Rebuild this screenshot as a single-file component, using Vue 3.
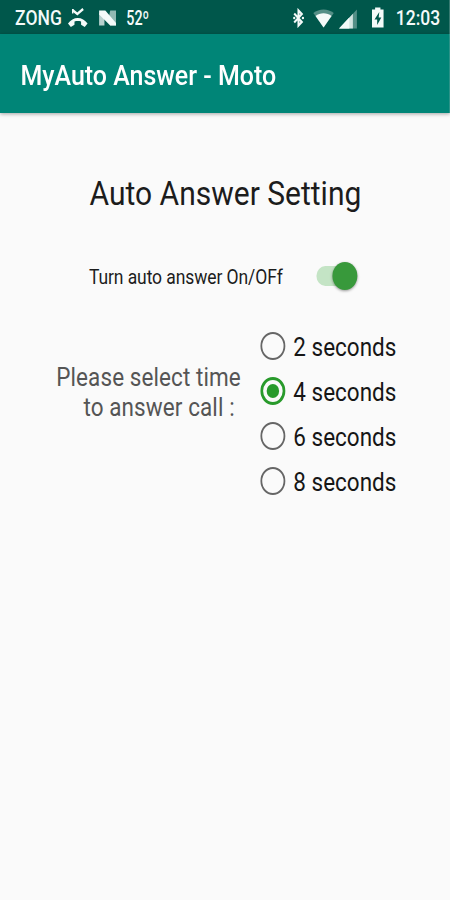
<script setup>
import { ref } from "vue";

const autoAnswer = ref(true);
const selected = ref(4);
const options = [2, 4, 6, 8];
</script>

<template>
  <div class="screen">
    <div class="status-bar">
      <span class="carrier">ZONG</span>
      <svg class="missed-icon" viewBox="0 0 23 20">
        <path d="M5.500 2L11 6L17.500 1" fill="none" stroke="currentColor" stroke-width="2.600" />
        <path d="M5.800 1V5.500" stroke="currentColor" stroke-width="1.600" />
        <path d="M0.500 15.500C6 8 17 8 22.500 15.500L19.300 19L15.200 16.800V13.500C12.700 12.900 10.300 12.900 7.800 13.500V16.800L3.700 19Z" fill="currentColor" />
      </svg>
      <svg class="n-icon" viewBox="0 0 20 16">
        <path d="M13 0.500H19.500V15.500H13L11 9Z" fill="currentColor" opacity="0.6" />
        <path d="M0.500 0.500H7.500L19.500 13V15.500H13L0.500 4.500Z" fill="currentColor" />
        <path d="M0.500 3V15.500H6.500V8Z" fill="currentColor" opacity="0.75" />
      </svg>
      <span class="temp">52º</span>
      <svg class="bt-icon" viewBox="0 0 14 20">
        <path d="M2 5.500L10.500 14L6.800 17.500V2.500L10.500 6L2 14.500" fill="none" stroke="currentColor" stroke-width="2.300" />
        <circle cx="2" cy="10" r="1.300" fill="currentColor" />
        <circle cx="11.800" cy="10" r="1.300" fill="currentColor" />
      </svg>
      <svg class="wifi-icon" viewBox="0 0 24 19">
        <path d="M12 18.500L0.500 4C7 -0.800 17 -0.800 23.500 4Z" fill="currentColor" opacity="0.35" />
        <path d="M12 18.500L3 7C8 3.300 16 3.300 21 7Z" fill="currentColor" />
      </svg>
      <svg class="signal-icon" viewBox="0 0 22 20">
        <path d="M0.500 19.500L20.500 0.500V19.500Z" fill="currentColor" opacity="0.35" />
        <path d="M0.500 19.500L16 4.800V19.500Z" fill="currentColor" opacity="0.8" />
        <path d="M0.500 19.500L12 8.600V19.500Z" fill="currentColor" />
      </svg>
      <svg class="battery-icon" viewBox="0 0 14 21">
        <path d="M4 0.500H10V2.500H13.500V20.500H0.500V2.500H4Z" fill="currentColor" />
        <path d="M8.700 5L3.300 12.400H6.300V18L11 10.600H8Z" fill="#00574b" />
      </svg>
      <span class="clock">12:03</span>
    </div>

    <header class="app-bar">MyAuto Answer - Moto</header>

    <main class="content">
      <h1>Auto Answer Setting</h1>

      <div class="toggle-row">
        <span>Turn auto answer On/OFf</span>
        <button
          class="switch"
          :class="{ on: autoAnswer }"
          role="switch"
          :aria-checked="autoAnswer"
          aria-label="Auto answer"
          @click="autoAnswer = !autoAnswer"
        >
          <span class="thumb"></span>
        </button>
      </div>

      <div class="time-row">
        <p class="prompt">
          <span>Please select time</span>
          <span class="second">to answer call :</span>
        </p>
        <div class="options">
          <label v-for="n in options" :key="n" class="option">
            <input v-model="selected" type="radio" name="delay" :value="n" />
            <span>{{ n }} seconds</span>
          </label>
        </div>
      </div>
    </main>
  </div>
</template>

<style>
body {
  overflow: hidden;
  background: #fafafa;
}
</style>

<style scoped>
/* 9:16 layout squeezed to the 1:2 viewport */
.screen {
  width: 506.25px;
  height: 900px;
  transform: scaleX(0.88889);
  transform-origin: 0 0;
  background: #fafafa;
  color: #1c1c1c;
  font-family: Roboto, "Liberation Sans", sans-serif;
}

.status-bar {
  display: flex;
  align-items: center;
  box-sizing: border-box;
  height: 34px;
  padding: 4px 11px 0 17px;
  background: #00574b;
  color: #f4faf9;
  font-size: 19.7px;
  font-weight: 500;
  line-height: 30px;
  white-space: nowrap;
}

.status-bar svg {
  flex: none;
}

.carrier {
  width: 59px;
}

.missed-icon {
  width: 23px;
  height: 20px;
  margin-top: -3px;
}

.n-icon {
  width: 20px;
  height: 16px;
  margin-left: 12px;
  margin-top: -3px;
}

.temp {
  margin-left: 11px;
  transform: scaleX(0.82);
  transform-origin: 0 50%;
}

.bt-icon {
  width: 14px;
  height: 20px;
  margin-left: auto;
  margin-right: 9px;
  margin-top: -3px;
}

.wifi-icon {
  width: 24px;
  height: 19px;
  margin-right: 5px;
  margin-top: -1px;
}

.signal-icon {
  width: 22px;
  height: 20px;
  margin-right: 15px;
  margin-top: -1px;
}

.battery-icon {
  width: 14px;
  height: 21px;
  margin-right: 13px;
  margin-top: -3px;
}

.app-bar {
  position: relative;
  box-sizing: border-box;
  height: 78.5px;
  padding-left: 23px;
  background: #008577;
  box-shadow: 0 1px 4px rgba(0, 0, 0, 0.35);
  color: #fff;
  font-size: 28.1px;
  font-weight: 500;
  line-height: 83px;
}

.content {
  padding-top: 61.5px;
}

h1 {
  margin: 0;
  padding-left: 1px;
  font-size: 33.75px;
  font-weight: 400;
  line-height: 40px;
  text-align: center;
}

.toggle-row {
  display: flex;
  align-items: center;
  height: 28px;
  margin-top: 48px;
  padding-left: 100px;
  font-size: 19.7px;
}

.toggle-row > span {
  width: 256px;
  padding-top: 2px;
  letter-spacing: -0.1px;
}

.switch {
  display: flex;
  align-items: center;
  width: 46px;
  height: 20px;
  padding: 0;
  border: 0;
  border-radius: 10px;
  background: #bdbdbd;
}

.switch.on {
  justify-content: flex-end;
  background: #c4e4c5;
}

.thumb {
  width: 28px;
  height: 28px;
  border-radius: 50%;
  background: #fff;
  box-shadow: 0 1px 3px rgba(0, 0, 0, 0.4);
}

.on .thumb {
  background: #38993b;
}

.time-row {
  display: flex;
  align-items: center;
  margin-top: 33px;
  font-size: 25.3px;
}

.prompt {
  display: flex;
  flex-direction: column;
  align-items: flex-end;
  width: 271px;
  margin: -40px 22px 0 0;
  color: #555;
  letter-spacing: 0.1px;
  line-height: 30px;
}

.second {
  padding-right: 7px;
}

.option {
  display: flex;
  align-items: center;
  height: 45px;
  color: #161616;
}

.option span {
  padding-top: 3px;
}

.option input {
  appearance: none;
  display: grid;
  place-items: center;
  box-sizing: border-box;
  width: 28px;
  height: 28px;
  margin: 0 9px 0 0;
  border: 2px solid #666;
  border-radius: 50%;
}

.option input:checked {
  border-width: 3px;
  border-color: #289a2b;
}

.option input:checked::before {
  content: "";
  width: 14px;
  height: 14px;
  border-radius: 50%;
  background: #289a2b;
}
</style>
